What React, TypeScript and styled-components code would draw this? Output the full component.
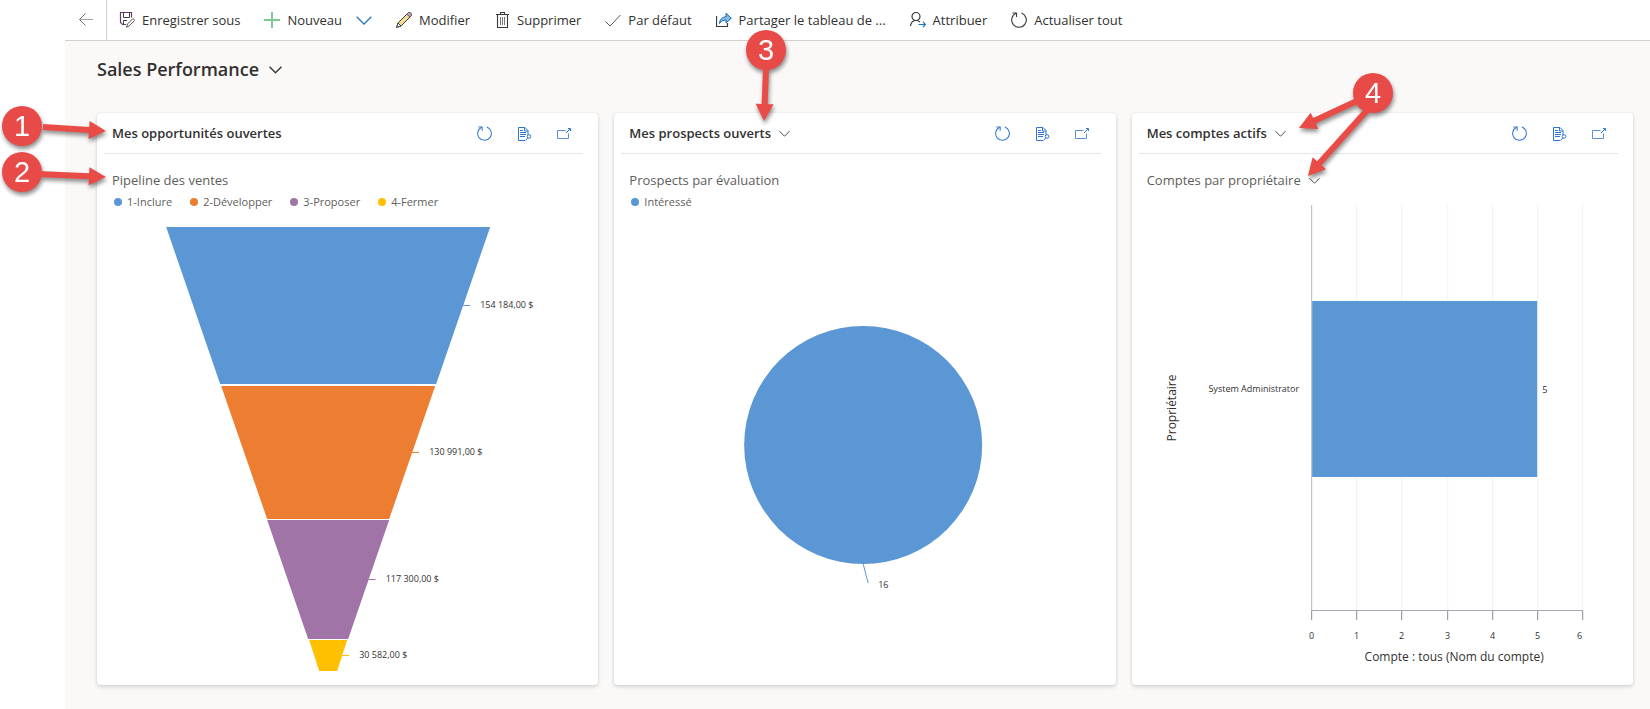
import React from "react";
import styled, { createGlobalStyle } from "styled-components";

const GlobalStyle = createGlobalStyle`
  *, *::before, *::after { box-sizing: border-box; }
  body {
    margin: 0;
    background: #fff;
    color: #323130;
    font-family: "Open Sans", "Noto Sans", sans-serif;
    font-size: 13px;
  }
`;

const Shell = styled.div`
  min-height: 100vh;
  padding-left: 65px;
  display: flex;
  flex-direction: column;
`;

const CommandBar = styled.nav`
  height: 41px;
  display: flex;
  align-items: stretch;
  background: #fff;
  border-bottom: 1px solid #d2d0ce;
`;

const BackButton = styled.button`
  width: 42px;
  padding: 0 0 2px;
  border: 0;
  border-right: 1px solid #d2d0ce;
  background: none;
  display: flex;
  align-items: center;
  justify-content: center;
`;

const Commands = styled.div`
  display: flex;
  align-items: center;
  padding-left: 12px;
  gap: 24px;
`;

const CommandGroup = styled.div`
  display: flex;
  align-items: center;
  gap: 14px;
`;

const Command = styled.button`
  display: flex;
  align-items: center;
  gap: 7px;
  padding: 0;
  border: 0;
  background: none;
  color: #323130;
  font: inherit;
  line-height: 20px;
  white-space: nowrap;

  svg { flex: none; }
`;

const Board = styled.main`
  flex: 1;
  padding: 14px 17px 24px 32px;
  background: #faf9f8;
`;

const PageTitle = styled.h1`
  margin: 0 0 30px;
  font-size: 18px;
  font-weight: 600;
  line-height: 28px;
`;

const TitleButton = styled.button<{ $gap?: number }>`
  display: inline-flex;
  align-items: center;
  gap: ${(p) => p.$gap ?? 8}px;
  padding: 0;
  border: 0;
  background: none;
  color: inherit;
  font: inherit;
`;

const Grid = styled.div`
  display: grid;
  grid-template-columns: repeat(3, minmax(0, 1fr));
  gap: 16px;
`;

const Card = styled.section`
  position: relative;
  background: #fff;
  border-radius: 4px;
  box-shadow: 0 2px 4px rgba(0, 0, 0, 0.14), 0 0 2px rgba(0, 0, 0, 0.1);
`;

const CardHeader = styled.header`
  display: flex;
  align-items: center;
  justify-content: space-between;
  height: 41px;
  margin: 0 15px 0 7px;
  padding: 0 11px 0 8px;
  border-bottom: 1px solid #e6e6e6;
`;

const CardTitle = styled.h2`
  margin: 0;
  font-size: 13px;
  font-weight: 600;
  line-height: 20px;
`;

const CardActions = styled.div`
  display: flex;
  gap: 25px;
  padding-top: 2px;
`;

const IconButton = styled.button`
  display: flex;
  padding: 0;
  border: 0;
  background: none;
`;

const ChartTitle = styled.h3`
  margin: 16px 15px 0;
  color: #605e5c;
  font-size: 13px;
  font-weight: 400;
  line-height: 20px;
`;

const Legend = styled.ul`
  display: flex;
  gap: 18px;
  height: 24px;
  margin: 0 16px;
  padding: 0 0 0 1px;
  list-style: none;
  color: #605e5c;
  font-size: 11px;
  line-height: 24px;
`;

const LegendItem = styled.li<{ $color: string }>`
  display: flex;
  align-items: center;
  gap: 5px;

  &::before {
    content: "";
    width: 8px;
    height: 8px;
    border-radius: 50%;
    background: ${(p) => p.$color};
  }
`;

const Chart = styled.svg<{ $height: number }>`
  display: block;
  width: 100%;
  height: ${(p) => p.$height}px;
  font-size: 9px;
  fill: #323130;

  .axis-title { font-size: 12px; }
`;

const CalloutLayer = styled.svg`
  position: absolute;
  top: 0;
  left: 0;
  width: 1px;
  height: 1px;
  z-index: 2;
  overflow: visible;
  pointer-events: none;
  filter: drop-shadow(1px 3px 2px rgba(0, 0, 0, 0.45));

  text {
    fill: #fff;
    font-family: "Liberation Sans", sans-serif;
    font-size: 29px;
    text-anchor: middle;
  }
`;

/* ---------- icons ---------- */

const INK = "#3b3a39";
const BLUE = "#2f76d2";

const Icon = ({ children, size = 16 }: { children: React.ReactNode; size?: number }) => (
  <svg width={size} height={size} viewBox={`0 0 ${size} ${size}`} fill="none" stroke={INK} aria-hidden="true">
    {children}
  </svg>
);

const BackIcon = () => (
  <Icon>
    <path d="M1.5 8.5H15" stroke="#a3a2a5" />
    <path d="M7.5 2.5l-6 6 6 6" stroke="#6f6e70" />
  </Icon>
);

const SaveAsIcon = () => (
  <Icon>
    <path d="M7 12.500H3.500l-2-2V.5h11v5" stroke="#6b3a70" strokeWidth="1.200" />
    <path d="M4.500.5v5h6v-5" stroke="#3f3a44" />
    <path d="M4.500 12.500v-4h3.500" stroke="#3f3a44" />
    <path d="M7.500 15.300l1-3.300 5.500-5.500 1.800 1.800-5.500 5.500z" fill="#fff" stroke="#555" />
  </Icon>
);

const PlusIcon = () => (
  <Icon>
    <path d="M8 0v16M0 8h16" stroke="#7ccb98" strokeWidth="2" />
  </Icon>
);

const PencilIcon = () => (
  <Icon>
    <path d="M.7 15.300l1.400-4.500L12 1c.8-.8 2-.6 2.800.2s.9 2 .1 2.800L5.200 13.900z" fill="#f6dc94" />
    <path d="M10.900 2.200L12.300.8c.8-.7 1.800-.4 2.500.3s1 1.700.3 2.500l-1.400 1.400z" fill="#c9a0c4" stroke="#6b5868" />
    <path d="M2 11l3 3-4.300 1.300z" fill="#fff" />
  </Icon>
);

const TrashIcon = () => (
  <Icon>
    <path d="M2 2.500h13M6.500 2.500v-2h4v2M3.500 2.500v13h10v-13" strokeWidth="1.100" />
    <path d="M6.500 5v8M8.500 5v8M10.500 5v8" stroke="#777" />
  </Icon>
);

const CheckIcon = () => (
  <Icon>
    <path d="M.5 9.500l4.500 4.500L15.500 3" stroke="#555" />
  </Icon>
);

const ShareIcon = () => (
  <Icon>
    <path d="M.5 4v10.500h11V11" strokeWidth="1.200" />
    <path d="M3.500 11.500c.4-4 2.500-6.500 6.500-6.700V1.300l5.300 5-5.300 4.600V8c-3 0-5 1-6.500 3.500z" fill="#83bdea" stroke="#1766ad" />
  </Icon>
);

const AssignIcon = () => (
  <Icon>
    <circle cx="6" cy="4.500" r="4" strokeWidth="1.200" />
    <path d="M.5 14c.4-3.500 2.500-5.500 5.500-5.500 1.700 0 3 .6 4 1.500" strokeWidth="1.200" />
    <path d="M8.500 12.500h7M13 10l2.500 2.500L13 15" stroke="#2474b8" strokeWidth="1.200" />
  </Icon>
);

const RefreshIcon = ({ color = INK, size = 16 }: { color?: string; size?: number }) => (
  <svg width={size} height={size} viewBox="0 0 16 16" fill="none" stroke={color} strokeWidth="1.100" aria-hidden="true">
    <path d="M10.500 1.100A7.300 7.300 0 1 1 5 1.300" />
    <path d="M1.500 1h4v4" />
  </svg>
);

const RecordsIcon = () => (
  <svg width="15" height="16" viewBox="0 0 15 16" fill="none" stroke={BLUE} aria-hidden="true">
    <path d="M8 14.500H1.500v-13h6.500l3 3V9" />
    <path d="M7.500 1.500v3.500h3.500" />
    <path d="M3 4.500h3M3 6.500h6M3 8.500h6M3 10.500h5" />
    <circle cx="12" cy="10.500" r="1.800" />
    <path d="M10.700 12L8.500 14.500" />
  </svg>
);

const ExpandIcon = () => (
  <svg width="15" height="16" viewBox="0 0 15 16" fill="none" stroke={BLUE} aria-hidden="true">
    <path d="M8.500 4.500H.5v8h11V7.500" stroke="#5b8fd8" />
    <path d="M9 7l4-4M11 2.500h2.500V5" />
  </svg>
);

const Chevron = ({ width, color = INK, stroke = 1 }: { width: number; color?: string; stroke?: number }) => (
  <svg width={width} height={width} viewBox="0 0 12 12" fill="none" stroke={color} strokeWidth={stroke} aria-hidden="true">
    <path d="M.5 3.500L6 9l5.500-5.500" />
  </svg>
);

/* ---------- callouts ---------- */

type Arrow = { from: [number, number]; to: [number, number] };

const Callout = ({ label, x, y, arrows }: { label: string; x: number; y: number; arrows: Arrow[] }) => (
  <CalloutLayer>
    <circle cx={x} cy={y} r="20" fill="#e84a48" />
    {arrows.map(({ from, to }, i) => {
      const length = Math.hypot(to[0] - from[0], to[1] - from[1]);
      const angle = (Math.atan2(to[1] - from[1], to[0] - from[0]) * 180) / Math.PI;
      const neck = length - 17;
      return (
        <path
          key={i}
          transform={`translate(${from[0]} ${from[1]}) rotate(${angle})`}
          d={`M0-3L${neck}-3V-9L${length} 0L${neck} 9V3L0 3z`}
          fill="#e94b46"
        />
      );
    })}
    <text x={x} y={y + 10}>{label}</text>
  </CalloutLayer>
);

/* ---------- charts ---------- */

const funnelCentre = 231;
const funnel = [
  { name: "1-Inclure", value: "154 184,00 $", color: "#5b97d5", top: 114, bottom: 271, wide: 162, narrow: 108 },
  { name: "2-Développer", value: "130 991,00 $", color: "#ed7e31", top: 273, bottom: 406, wide: 107, narrow: 61 },
  { name: "3-Proposer", value: "117 300,00 $", color: "#a074a7", top: 407, bottom: 526, wide: 61, narrow: 20 },
  { name: "4-Fermer", value: "30 582,00 $", color: "#ffc002", top: 527, bottom: 558, wide: 19, narrow: 9 },
];

const FunnelChart = () => (
  <Chart $height={471} viewBox="0 101 501 471" role="img" aria-label="Pipeline des ventes">
    {funnel.map((s) => {
      const mid = Math.floor((s.top + s.bottom) / 2);
      const edge = funnelCentre + (s.wide + s.narrow) / 2;
      return (
        <g key={s.name}>
          <polygon
            fill={s.color}
            points={`${funnelCentre - s.wide},${s.top} ${funnelCentre + s.wide},${s.top} ${funnelCentre + s.narrow},${s.bottom} ${funnelCentre - s.narrow},${s.bottom}`}
          />
          <path d={`M${edge} ${mid + 0.5}h7`} stroke={s.color} />
          <text x={edge + 17} y={mid + 3}>{s.value}</text>
        </g>
      );
    })}
  </Chart>
);

const PieChart = () => (
  <Chart $height={471} viewBox="0 101 501 471" role="img" aria-label="Prospects par évaluation">
    <circle cx="249" cy="332" r="119" fill="#5b97d5" />
    <path d="M249 451l5 19" stroke="#5b97d5" />
    <text x="264" y="475">16</text>
  </Chart>
);

const AXIS_X = 180;
const STEP = 45.2;
const ticks = [0, 1, 2, 3, 4, 5, 6];

const BarChart = () => (
  <Chart $height={495} viewBox="0 77 501 495" role="img" aria-label="Comptes par propriétaire">
    {ticks.map((t) => {
      const x = Math.round(AXIS_X + t * STEP) - 0.5;
      return (
        <g key={t}>
          <path d={`M${x} 92V497`} stroke={t === 0 ? "#b3b8c0" : "#f1f2f4"} />
          <path d={`M${x} 498v9`} stroke="#8c8c8c" />
          <text x={t === 6 ? x - 3 : x} y="526" textAnchor="middle">{t}</text>
        </g>
      );
    })}
    <path d="M179 497.500H451" stroke="#a3a8b2" />
    <rect x={AXIS_X} y="188" width={5 * STEP - 1} height="176" fill="#5b97d5" />
    <text x="167" y="279" textAnchor="end">System Administrator</text>
    <text x="410" y="280">5</text>
    <text className="axis-title" transform="translate(44 295) rotate(-90)" textAnchor="middle">Propriétaire</text>
    <text className="axis-title" x="322" y="548" textAnchor="middle">Compte : tous (Nom du compte)</text>
  </Chart>
);

/* ---------- page ---------- */

const Actions = () => (
  <CardActions>
    <IconButton aria-label="Actualiser"><RefreshIcon color={BLUE} size={15} /></IconButton>
    <IconButton aria-label="Afficher les enregistrements"><RecordsIcon /></IconButton>
    <IconButton aria-label="Développer le graphique"><ExpandIcon /></IconButton>
  </CardActions>
);

export default function App() {
  return (
    <>
      <GlobalStyle />
      <Shell>
        <CommandBar aria-label="Commandes">
          <BackButton aria-label="Retour"><BackIcon /></BackButton>
          <Commands>
            <Command><SaveAsIcon />Enregistrer sous</Command>
            <CommandGroup>
              <Command><PlusIcon />Nouveau</Command>
              <IconButton aria-label="Plus d’options"><Chevron width={16} color="#2b7bb9" /></IconButton>
            </CommandGroup>
            <Command><PencilIcon />Modifier</Command>
            <Command><TrashIcon />Supprimer</Command>
            <Command><CheckIcon />Par défaut</Command>
            <Command><ShareIcon />Partager le tableau de ...</Command>
            <Command><AssignIcon />Attribuer</Command>
            <Command><RefreshIcon />Actualiser tout</Command>
          </Commands>
        </CommandBar>
        <Board>
          <PageTitle>
            <TitleButton $gap={10}>Sales Performance<Chevron width={13} stroke={1.4} /></TitleButton>
          </PageTitle>
          <Grid>
            <Card>
              <CardHeader>
                <CardTitle>Mes opportunités ouvertes</CardTitle>
                <Actions />
              </CardHeader>
              <ChartTitle>Pipeline des ventes</ChartTitle>
              <Legend>
                {funnel.map((s) => (
                  <LegendItem key={s.name} $color={s.color}>{s.name}</LegendItem>
                ))}
              </Legend>
              <FunnelChart />
              <Callout label="1" x={-75} y={13} arrows={[{ from: [-54, 14], to: [9, 18] }]} />
              <Callout label="2" x={-75} y={59} arrows={[{ from: [-59, 61], to: [9, 64] }]} />
            </Card>
            <Card>
              <CardHeader>
                <CardTitle><TitleButton>Mes prospects ouverts<Chevron width={11} /></TitleButton></CardTitle>
                <Actions />
              </CardHeader>
              <ChartTitle>Prospects par évaluation</ChartTitle>
              <Legend>
                <LegendItem $color="#5b97d5">Intéressé</LegendItem>
              </Legend>
              <PieChart />
              <Callout label="3" x={152} y={-63} arrows={[{ from: [152, -44], to: [150, 8] }]} />
            </Card>
            <Card>
              <CardHeader>
                <CardTitle><TitleButton>Mes comptes actifs<Chevron width={11} /></TitleButton></CardTitle>
                <Actions />
              </CardHeader>
              <ChartTitle><TitleButton>Comptes par propriétaire<Chevron width={11} /></TitleButton></ChartTitle>
              <BarChart />
              <Callout
                label="4"
                x={241}
                y={-20}
                arrows={[
                  { from: [227, -13], to: [167, 15] },
                  { from: [237, -5], to: [176, 63] },
                ]}
              />
            </Card>
          </Grid>
        </Board>
      </Shell>
    </>
  );
}
